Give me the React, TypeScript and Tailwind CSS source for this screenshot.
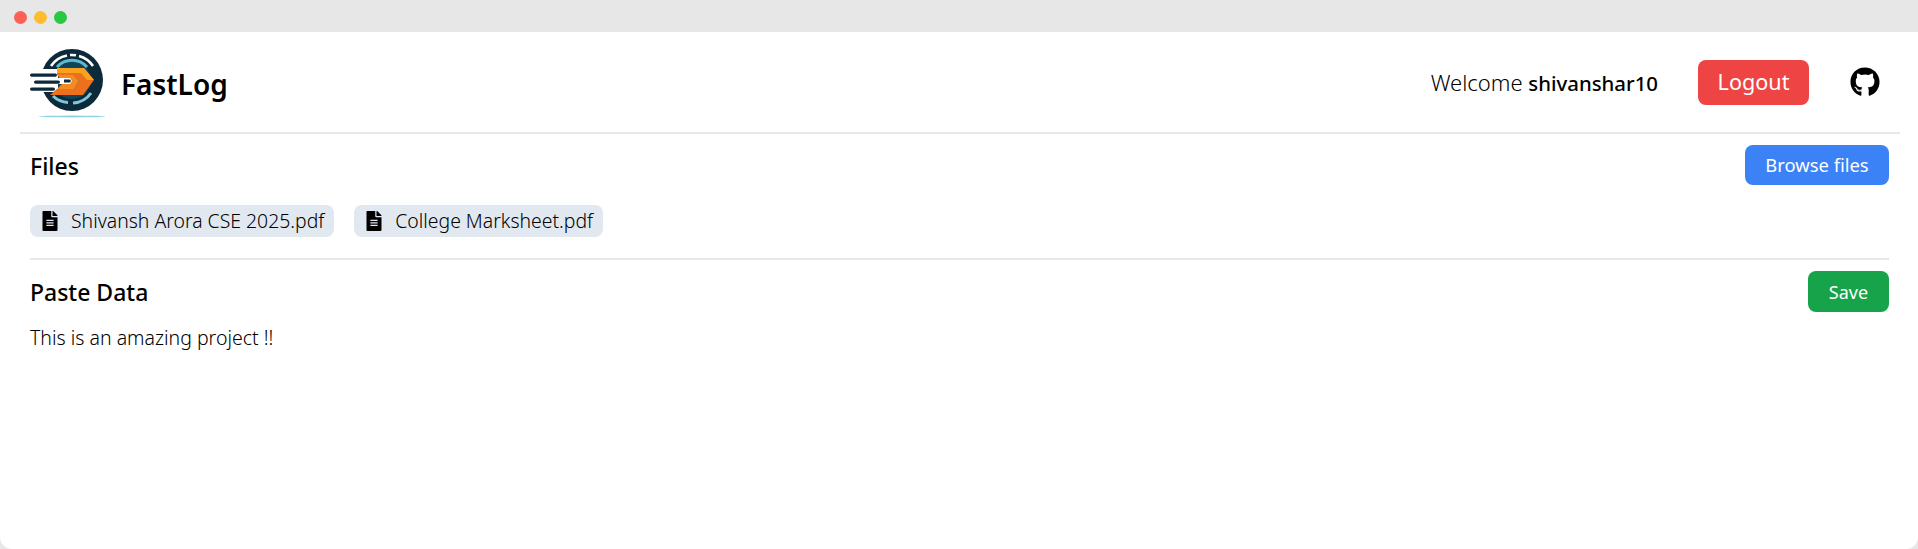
import { FaFileAlt, FaGithub } from 'react-icons/fa'

const files = ['Shivansh Arora CSE 2025.pdf', 'College Marksheet.pdf']

function Logo() {
  return (
    <svg width="75" height="72" viewBox="10 8 75 72" className="shrink-0">
      {/* rings */}
      <circle cx="52" cy="40" r="31" fill="#0c2a3a" />
      <path d="M31 26 A25 25 0 0 1 47 15.5" fill="none" stroke="#fff" strokeWidth="2.6" />
      <path d="M50 15 A25 25 0 0 1 56 15.3" fill="none" stroke="#fff" strokeWidth="2.6" />
      <path d="M59 16 A25 25 0 0 1 73 26" fill="none" stroke="#fff" strokeWidth="2.6" />
      <circle cx="52" cy="40" r="19" fill="#12455c" />
      <path d="M37 27 A20 20 0 0 1 67 27" fill="none" stroke="#5fb9cf" strokeWidth="3" />
      <path d="M33 56 A23 23 0 0 0 48 62.5" fill="none" stroke="#7cc8da" strokeWidth="3" />
      <path d="M53 63 A23 23 0 0 0 71 53" fill="none" stroke="#7cc8da" strokeWidth="3" />
      {/* left white gap behind the speed lines */}
      <rect x="10" y="29" width="28" height="23" fill="#fff" />
      {/* arrow */}
      <path d="M37 28 H64 L74 40 L63 55 H30 L37 49 H54 L59 41 L54 35 H37 Z" fill="#ee6f1e" />
      <path d="M37 28 H64 L74 40 L67 40 L61 33 H37 Z" fill="#f9a21e" />
      <path d="M37 35 H54 L59 41 L54 49 H37 L44 42 Z" fill="#f58a1f" />
      <path d="M37 38 H50 L52 41 L50 44 H37 Z" fill="#fff" />
      <path d="M44 39.5 H50 L51 41 L50 42.5 H44 Z" fill="#0c2a3a" />
      {/* speed lines */}
      <rect x="10" y="33.5" width="27" height="3.2" rx="1.6" fill="#0c2a3a" />
      <rect x="14" y="40.5" width="26" height="3.2" rx="1.6" fill="#0c2a3a" />
      <rect x="10" y="47.5" width="25" height="3.2" rx="1.6" fill="#0c2a3a" />
      <ellipse cx="52" cy="76.5" rx="34" ry="0.9" fill="#8fd3e3" />
    </svg>
  )
}

export default function App() {
  return (
    <div className="h-[549px] bg-[#e7e7e7] font-['Noto_Sans',sans-serif] text-black overflow-hidden">
      <div className="h-8 flex items-center gap-[7px] pl-[14px] pt-[2px]">
        <span className="w-[13px] h-[13px] rounded-full bg-[#ff5f57]" />
        <span className="w-[13px] h-[13px] rounded-full bg-[#febc2e]" />
        <span className="w-[13px] h-[13px] rounded-full bg-[#28c840]" />
      </div>
      <div className="h-[517px] bg-white rounded-b-xl pl-5 pr-[18px]">
        <header className="h-[102px] flex items-center justify-between border-b-2 border-[#e5e7eb] pl-[10px] pr-5">
          <div className="flex items-center gap-4 pt-1">
            <Logo />
            <span className="text-[28px] font-semibold">FastLog</span>
          </div>
          <div className="flex items-center">
            <span className="text-[22px] font-light">
              Welcome <span className="text-[20.4px] font-medium">shivanshar10</span>
            </span>
            <button className="ml-10 w-[111px] h-[45px] rounded-lg bg-[#ef4444] text-white text-[21.6px]">Logout</button>
            <FaGithub className="ml-[41px] w-[30px] h-[30px]" />
          </div>
        </header>

        <section className="pl-[10px] pr-[11px]">
          <div className="flex items-center justify-between pt-[11px]">
            <h2 className="mt-[2px] text-[23px] font-medium">Files</h2>
            <button className="w-[144px] h-10 rounded-lg bg-[#3b82f6] text-white text-[18.4px]">Browse files</button>
          </div>
          <div className="flex gap-[20px] mt-5 pb-[21px] border-b-2 border-[#e5e7eb]">
            {files.map((name) => (
              <div key={name} className="h-8 flex items-center gap-[13px] pl-3 pr-[10px] rounded-lg bg-[#e2e8f0] text-[19.4px] font-light leading-7">
                <FaFileAlt className="w-4 h-5" />
                {name}
              </div>
            ))}
          </div>
          <div className="flex items-center justify-between pt-[11px]">
            <h2 className="mt-[2px] text-[23px] font-medium">Paste Data</h2>
            <button className="w-[81px] h-[41px] rounded-lg bg-[#16a34a] text-white text-lg">Save</button>
          </div>
          <p className="mt-3 text-[19.5px] font-light leading-7">This is an amazing project !!</p>
        </section>
      </div>
    </div>
  )
}
